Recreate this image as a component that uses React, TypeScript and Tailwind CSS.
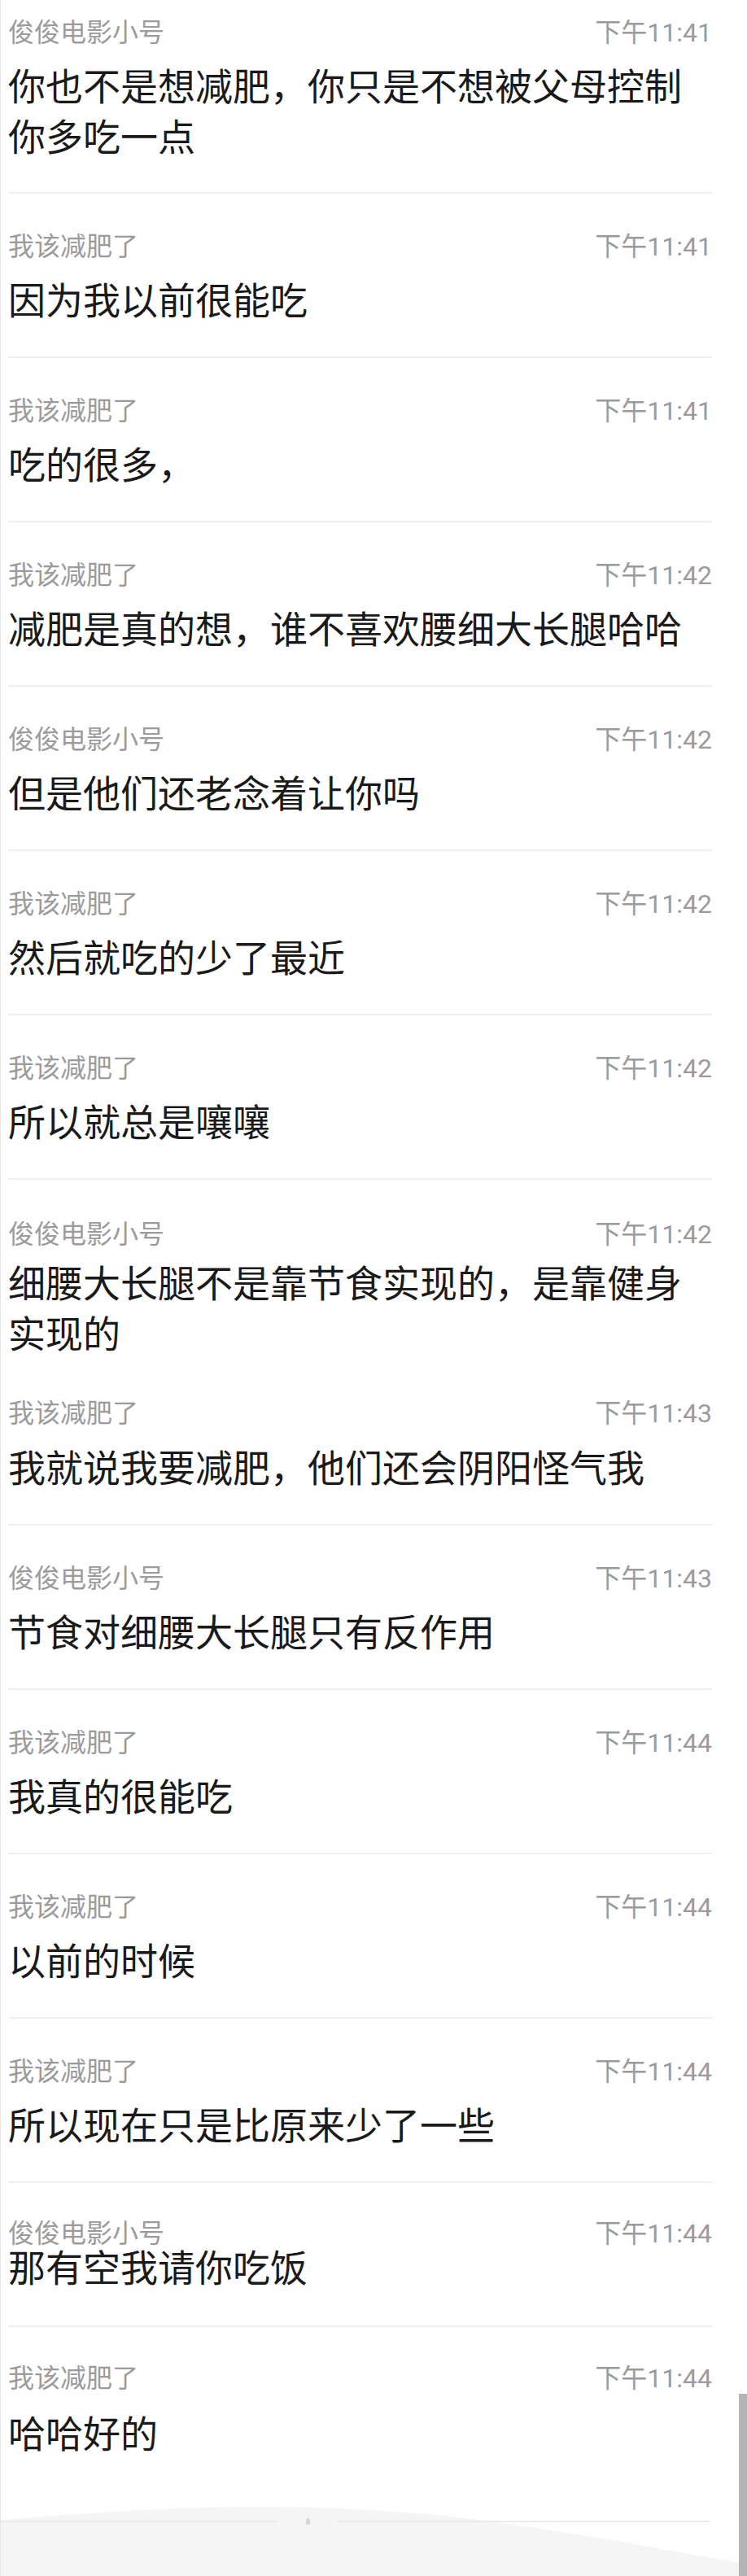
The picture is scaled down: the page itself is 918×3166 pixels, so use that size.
import clsx from 'clsx';

type Msg = {
  name: string;
  time: string;
  lines: string[];
  box?: string;
  gap?: string;
  noLine?: boolean;
};

const A = '俊俊电影小号';
const B = '我该减肥了';

const messages: Msg[] = [
  { name: A, time: '下午11:41', lines: ['你也不是想减肥，你只是不想被父母控制', '你多吃一点'], box: 'pt-[20px] pb-[36px]', noLine: true },
  { name: B, time: '下午11:41', lines: ['因为我以前很能吃'] },
  { name: B, time: '下午11:41', lines: ['吃的很多，'] },
  { name: B, time: '下午11:42', lines: ['减肥是真的想，谁不喜欢腰细大长腿哈哈'] },
  { name: A, time: '下午11:42', lines: ['但是他们还老念着让你吗'] },
  { name: B, time: '下午11:42', lines: ['然后就吃的少了最近'] },
  { name: B, time: '下午11:42', lines: ['所以就总是嚷嚷'] },
  { name: A, time: '下午11:42', lines: ['细腰大长腿不是靠节食实现的，是靠健身', '实现的'], box: 'pt-[47px] pb-0', gap: 'mt-[10px]' },
  { name: B, time: '下午11:43', lines: ['我就说我要减肥，他们还会阴阳怪气我'], box: 'pt-[46px] pb-[37px]', gap: 'mt-[17px]', noLine: true },
  { name: A, time: '下午11:43', lines: ['节食对细腰大长腿只有反作用'] },
  { name: B, time: '下午11:44', lines: ['我真的很能吃'] },
  { name: B, time: '下午11:44', lines: ['以前的时候'] },
  { name: B, time: '下午11:44', lines: ['所以现在只是比原来少了一些'] },
  { name: A, time: '下午11:44', lines: ['那有空我请你吃饭'], box: 'pt-[42px] pb-[39px]', gap: '-mt-[8px]' },
  { name: B, time: '下午11:44', lines: ['哈哈好的'], box: 'pt-[43px] pb-[75px]', gap: 'mt-[18px]' },
];

function Entry({ m }: { m: Msg }) {
  return (
    <div className={clsx(!m.noLine && 'border-t-2 border-[#efefef]', m.box ?? 'pt-[45px] pb-[37px]')}>
      <div className="flex h-[40px] items-center justify-between text-[32px] leading-[40px] text-[#9b9b9b]">
        <span>{m.name}</span>
        <span>{m.time}</span>
      </div>
      <div className={clsx('text-[46px] leading-[62px] text-[#1a1a1a]', m.gap ?? 'mt-[16px]')}>
        {m.lines.map((l, i) => (
          <div key={i} className="whitespace-nowrap">{l}</div>
        ))}
      </div>
    </div>
  );
}

export default function App() {
  return (
    <div className="relative h-[3166px] w-[918px] overflow-hidden border-l border-[#e8e8e8] bg-white font-[Roboto,'Noto_Sans_CJK_SC',sans-serif]">
      <div className="pl-[9px] pr-[43px]">
        {messages.map((m, i) => (
          <Entry key={i} m={m} />
        ))}
      </div>

      {/* pull-up area at the bottom */}
      <svg className="absolute bottom-0 left-0" width="918" height="90" viewBox="0 0 918 90">
        <path d="M0 21 C120 11 240 4 328 5 C450 6 540 14 611 24 C720 40 820 58 918 76 L918 90 L0 90 Z" fill="#f5f5f5" />
      </svg>
      <div className="relative flex h-[2px] items-center">
        <div className="h-[2px] w-[341px] bg-[#ebebeb]" />
        <div className="w-[34px]" />
        <div className="h-[8px] w-[5px] rounded-full bg-[#d6d6d6]" />
        <div className="w-[33px]" />
        <div className="h-[2px] w-[459px] bg-[#ebebeb]" />
      </div>

      <div className="absolute bottom-0 right-0 h-[224px] w-[10px] bg-[#b4b4b4]" />
    </div>
  );
}
